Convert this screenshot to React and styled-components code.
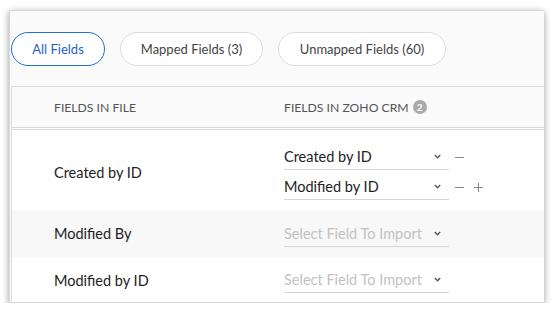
import React from "react";
import styled, { createGlobalStyle } from "styled-components";

const GlobalStyle = createGlobalStyle`
  body {
    margin: 0;
    background: #fff;
    font-family: Lato, "Open Sans", Arial, sans-serif;
  }
`;

const Frame = styled.div`
  box-sizing: border-box;
  width: 535px;
  height: 293px;
  margin: 10px 0 0 9px;
  background: #fafafa;
  border: 1px solid #d8d8d8;
  border-right: none;
  box-shadow: 0 2px 7px rgba(0, 0, 0, 0.4);
  padding: 21px 0 0 1px;
  overflow: hidden;
`;

const Tabs = styled.div`
  display: flex;
  gap: 15px;
  height: 34px;
`;

const Pill = styled.button`
  box-sizing: border-box;
  width: ${(p) => p.w}px;
  height: 34px;
  border-radius: 17px;
  background: #fff;
  border: 1px solid ${(p) => (p.active ? "#1f6fd6" : "#dcdcdc")};
  color: ${(p) => (p.active ? "#1f5fc8" : "#444")};
  font-family: Lato, "Open Sans", Arial, sans-serif;
  font-size: 13px;
  padding: 0;
  cursor: pointer;
`;

const Table = styled.div`
  margin-top: 20px;
  border-top: 1px solid #dcdcdc;
  border-left: 1px solid #dcdcdc;
`;

const Row = styled.div`
  box-sizing: border-box;
  display: grid;
  grid-template-columns: 272px 1fr;
  align-items: center;
  height: ${(p) => p.h}px;
  padding-top: ${(p) => p.top || 0}px;
  background: ${(p) => (p.shade ? "#f8f8f8" : "#fff")};
`;

const HeaderRow = styled(Row)`
  box-sizing: content-box;
  background: #fafafa;
  border-bottom: 3px double #d8d8d8;
`;

const HeadCell = styled.div`
  padding-left: ${(p) => p.pad}px;
  font-size: 12.2px;
  color: #555;
  display: flex;
  align-items: center;
  gap: 4px;
`;

const Badge = styled.span`
  display: inline-flex;
  align-items: center;
  justify-content: center;
  width: 14px;
  height: 14px;
  border-radius: 50%;
  background: #a9a9a9;
  color: #fff;
  font-size: 10px;
  font-weight: 700;
`;

const FileField = styled.div`
  padding-left: 42px;
  font-size: 14.5px;
  color: #222;
`;

const MapCell = styled.div`
  display: flex;
  flex-direction: column;
  gap: 4px;
`;

const MapLine = styled.div`
  display: flex;
  align-items: center;
`;

const Select = styled.div`
  box-sizing: border-box;
  width: 165px;
  height: 26px;
  display: flex;
  align-items: center;
  justify-content: space-between;
  padding-right: 8px;
  border-bottom: 1px solid #d6d6d6;
  font-size: 14.5px;
  color: ${(p) => (p.placeholder ? "#c2c2c2" : "#222")};
`;

const Action = styled.span`
  width: 9px;
  margin-left: ${(p) => p.gap}px;
  display: inline-flex;
`;

const Chevron = () => (
  <svg width="7" height="5" viewBox="0 0 7 5">
    <path d="M0.8 1 L3.5 3.7 L6.2 1" fill="none" stroke="#555" strokeWidth="1.4" />
  </svg>
);

const Minus = () => (
  <svg width="9" height="9" viewBox="0 0 9 9">
    <path d="M0 4.5 H9" stroke="#888" strokeWidth="1" />
  </svg>
);

const Plus = () => (
  <svg width="9" height="9" viewBox="0 0 9 9">
    <path d="M0 4.5 H9 M4.5 0 V9" stroke="#888" strokeWidth="1" />
  </svg>
);

const Mapping = ({ value, remove, add }) => (
  <MapLine>
    <Select placeholder={!value}>
      <span>{value || "Select Field To Import"}</span>
      <Chevron />
    </Select>
    {remove && (
      <Action gap={6}>
        <Minus />
      </Action>
    )}
    {add && (
      <Action gap={10}>
        <Plus />
      </Action>
    )}
  </MapLine>
);

export default function App() {
  return (
    <>
      <GlobalStyle />
      <Frame>
        <Tabs>
          <Pill active w={94}>All Fields</Pill>
          <Pill w={143}>Mapped Fields (3)</Pill>
          <Pill w={168}>Unmapped Fields (60)</Pill>
        </Tabs>
        <Table>
          <HeaderRow h={40}>
            <HeadCell pad={42}>FIELDS IN FILE</HeadCell>
            <HeadCell pad={0}>
              FIELDS IN ZOHO CRM <Badge>2</Badge>
            </HeadCell>
          </HeaderRow>
          <Row h={80} top={4}>
            <FileField>Created by ID</FileField>
            <MapCell>
              <Mapping value="Created by ID" remove />
              <Mapping value="Modified by ID" remove add />
            </MapCell>
          </Row>
          <Row h={47} shade>
            <FileField>Modified By</FileField>
            <MapCell>
              <Mapping />
            </MapCell>
          </Row>
          <Row h={46}>
            <FileField>Modified by ID</FileField>
            <MapCell>
              <Mapping />
            </MapCell>
          </Row>
        </Table>
      </Frame>
    </>
  );
}
